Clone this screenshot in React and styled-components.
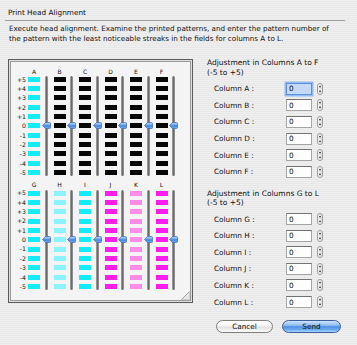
import React from 'react';
import styled, { createGlobalStyle, css } from 'styled-components';

const Global = createGlobalStyle`
  html, body { margin: 0; padding: 0; }
  body {
    width: 357px; height: 345px; overflow: hidden;
    font-family: "DejaVu Sans", Verdana, sans-serif;
  }
`;

const CYAN = '#12ecfb';
const LCYAN = '#8af3fb';
const MAG = '#ff1cec';
const LMAG = '#ff8ce8';
const BLACK = '#060606';

const ROW = 9.35;
const ROWS = ['+5', '+4', '+3', '+2', '+1', '0', '-1', '-2', '-3', '-4', '-5'];

const groups = [
  [
    { id: 'A', color: CYAN },
    { id: 'B', color: BLACK },
    { id: 'C', color: BLACK },
    { id: 'D', color: BLACK },
    { id: 'E', color: BLACK },
    { id: 'F', color: BLACK },
  ],
  [
    { id: 'G', color: CYAN },
    { id: 'H', color: LCYAN },
    { id: 'I', color: CYAN },
    { id: 'J', color: MAG },
    { id: 'K', color: LMAG },
    { id: 'L', color: MAG },
  ],
];

const Window = styled.div`
  width: 357px;
  height: 345px;
  box-sizing: border-box;
  padding-top: 8px;
  background: repeating-linear-gradient(
    to bottom,
    #efefef 0px, #efefef 1px, #e8e8e8 1px, #e8e8e8 2px
  );
  color: #111;
  font-size: 7.3px;
`;

const Title = styled.div`
  margin-left: 8px;
  line-height: 9px;
  height: 9px;
`;

const Separator = styled.div`
  height: 1px;
  margin: 3px 12px 0 5px;
  background: #a2a2a2;
`;

const Description = styled.p`
  margin: 3.25px 0 0 9px;
  font-size: 7.2px;
  line-height: 9.5px;
  white-space: nowrap;
`;

const Body = styled.div`
  display: flex;
  margin-top: 15.75px;
  padding-left: 8px;
`;

const Panel = styled.div`
  position: relative;
  box-sizing: border-box;
  width: 185px;
  height: 244px;
  flex: none;
  border: 1px solid #5a5a5a;
  box-shadow: inset 0 0 0 1px #dedede, inset 0 0 0 2px #9a9a9a;
  background: #f4f4f4;
  padding: 7.5px 0 0 3px;
  display: flex;
  flex-direction: column;
  gap: 4.15px;
`;

const Group = styled.div`
  display: flex;
`;

const RowLabels = styled.div`
  width: 14px;
  margin-right: 2px;
  display: flex;
  flex-direction: column;
`;

const HeadSpacer = styled.div`
  height: 7px;
`;

const RowLabel = styled.div`
  height: ${ROW}px;
  line-height: ${ROW}px;
  text-align: right;
  font-size: 6.2px;
`;

const PatternCol = styled.div`
  width: 25.5px;
  flex: none;
  display: flex;
  flex-direction: column;
`;

const ColLabel = styled.div`
  width: 12px;
  height: 7px;
  line-height: 7px;
  text-align: center;
  font-size: 6px;
`;

const ColBody = styled.div`
  display: flex;
`;

const Bars = styled.div`
  width: 12px;
  display: flex;
  flex-direction: column;
`;

const BarCell = styled.div`
  height: ${ROW}px;
  display: flex;
  align-items: center;
`;

const Bar = styled.div`
  width: 12px;
  height: 5px;
  background: ${(p) => p.$color};
`;

const Track = styled.div`
  position: relative;
  width: 3px;
  margin-left: 4.5px;
  margin-top: 1.7px;
  height: ${ROW * 11 - 3.4}px;
  border-radius: 1.5px;
  background: linear-gradient(to right, #a9a9a9, #6c6c6c 50%, #9d9d9d);
`;

const ThumbWrap = styled.div`
  position: absolute;
  left: -3px;
  top: ${ROW * 5 + ROW / 2 - 1.7 - 3.5}px;
  width: 9px;
  height: 7px;
  line-height: 0;
`;

const Grip = styled.div`
  position: absolute;
  right: 2px;
  bottom: 2px;
  width: 9px;
  height: 9px;
  line-height: 0;
`;

const Side = styled.div`
  display: flex;
  flex-direction: column;
  width: 134px;
  margin-left: 14px;
  margin-top: -0.75px;
`;

const Heading = styled.div`
  font-size: 7.5px;
  line-height: 9.5px;
  margin-top: ${(p) => p.$gap || 0}px;
  margin-bottom: 3.25px;
`;

const FieldRow = styled.div`
  height: 16.6px;
  display: flex;
  align-items: center;
  padding-left: 7px;
`;

const FieldLabel = styled.span`
  width: 72px;
  flex: none;
`;

const NumberField = styled.input`
  box-sizing: border-box;
  width: 26px;
  height: 12px;
  margin: 0;
  padding: 0 0 0 2px;
  font-family: inherit;
  font-size: 7.3px;
  line-height: 10px;
  color: #111;
  background: #fff;
  border: 1px solid #a4a4a4;
  border-top-color: #727272;
  outline: none;
  ${(p) =>
    p.$focused &&
    css`
      background: #c3d9f7;
      border-color: #5f8fd4;
      box-shadow: 0 0 0 1.5px #93bbef;
    `}
`;

const StepperWrap = styled.div`
  margin-left: 5px;
  line-height: 0;
`;

const Buttons = styled.div`
  display: flex;
  justify-content: flex-end;
  gap: 9px;
  margin-top: 9.6px;
`;

const Button = styled.button`
  box-sizing: border-box;
  height: 13px;
  width: ${(p) => p.$w}px;
  padding: 0;
  font-family: inherit;
  font-size: 7.3px;
  line-height: 11px;
  color: #111;
  border-radius: 7px;
  border: 1px solid #7f7f7f;
  background: linear-gradient(#ffffff, #f4f4f4 45%, #e2e2e2 55%, #fafafa);
  ${(p) =>
    p.$primary &&
    css`
      border-color: #3d5e9c;
      background: linear-gradient(#cfe4fc, #8ebcf1 40%, #4f90e2 52%, #6eaef3 80%, #a9d6ff);
    `}
`;

function Thumb() {
  return (
    <svg width="9" height="7" viewBox="0 0 9 7">
      <defs>
        <linearGradient id="tg" x1="0" y1="0" x2="0" y2="1">
          <stop offset="0" stopColor="#b9d8fa" />
          <stop offset="0.45" stopColor="#6aa6ec" />
          <stop offset="0.55" stopColor="#3d7fdc" />
          <stop offset="1" stopColor="#7ab6f4" />
        </linearGradient>
      </defs>
      <path
        d="M0.5 3.5 L3.4 0.5 H7.5 Q8.5 0.5 8.5 1.5 V5.5 Q8.5 6.5 7.5 6.5 H3.4 Z"
        fill="url(#tg)"
        stroke="#3c68ad"
        strokeWidth="0.7"
      />
    </svg>
  );
}

function Stepper() {
  return (
    <svg width="6" height="12" viewBox="0 0 6 12">
      <defs>
        <linearGradient id="sg" x1="0" y1="0" x2="1" y2="0">
          <stop offset="0" stopColor="#ffffff" />
          <stop offset="1" stopColor="#e4e4e4" />
        </linearGradient>
      </defs>
      <rect x="0.5" y="0.5" width="5" height="11" rx="2.5" fill="url(#sg)" stroke="#858585" strokeWidth="0.8" />
      <line x1="0.8" y1="6" x2="5.2" y2="6" stroke="#c4c4c4" strokeWidth="0.5" />
      <path d="M3 2.4 L4.3 4.3 H1.7 Z" fill="#222" />
      <path d="M3 9.6 L4.3 7.7 H1.7 Z" fill="#222" />
    </svg>
  );
}

function GripIcon() {
  return (
    <svg width="9" height="9" viewBox="0 0 9 9">
      <path d="M8.5 0.5 V8.5 H0.5 Z" fill="#e6e6e6" />
      <line x1="8.5" y1="0.5" x2="0.5" y2="8.5" stroke="#8d8d8d" strokeWidth="0.8" />
      <line x1="8.5" y1="0.5" x2="8.5" y2="8.5" stroke="#b8b8b8" strokeWidth="0.6" />
      <line x1="0.5" y1="8.5" x2="8.5" y2="8.5" stroke="#b8b8b8" strokeWidth="0.6" />
    </svg>
  );
}

function PatternGroup({ cols }) {
  return (
    <Group>
      <RowLabels>
        <HeadSpacer />
        {ROWS.map((r) => (
          <RowLabel key={r}>{r}</RowLabel>
        ))}
      </RowLabels>
      {cols.map((c) => (
        <PatternCol key={c.id}>
          <ColLabel>{c.id}</ColLabel>
          <ColBody>
            <Bars>
              {ROWS.map((r) => (
                <BarCell key={r}>
                  <Bar $color={c.color} />
                </BarCell>
              ))}
            </Bars>
            <Track>
              <ThumbWrap>
                <Thumb />
              </ThumbWrap>
            </Track>
          </ColBody>
        </PatternCol>
      ))}
    </Group>
  );
}

function Fields({ ids }) {
  return ids.map((id) => (
    <FieldRow key={id}>
      <FieldLabel>Column {id} :</FieldLabel>
      <NumberField readOnly value="0" $focused={id === 'A'} />
      <StepperWrap>
        <Stepper />
      </StepperWrap>
    </FieldRow>
  ));
}

export default function App() {
  return (
    <Window>
      <Global />
      <Title>Print Head Alignment</Title>
      <Separator />
      <Description>
        Execute head alignment. Examine the printed patterns, and enter the pattern number of
        <br />
        the pattern with the least noticeable streaks in the fields for columns A to L.
      </Description>
      <Body>
        <Panel>
          {groups.map((g, i) => (
            <PatternGroup key={i} cols={g} />
          ))}
          <Grip>
            <GripIcon />
          </Grip>
        </Panel>
        <Side>
          <Heading>
            Adjustment in Columns A to F
            <br />
            (-5 to +5)
          </Heading>
          <Fields ids={['A', 'B', 'C', 'D', 'E', 'F']} />
          <Heading $gap={8.45}>
            Adjustment in Columns G to L
            <br />
            (-5 to +5)
          </Heading>
          <Fields ids={['G', 'H', 'I', 'J', 'K', 'L']} />
          <Buttons>
            <Button $w={57}>Cancel</Button>
            <Button $w={59} $primary>
              Send
            </Button>
          </Buttons>
        </Side>
      </Body>
    </Window>
  );
}
